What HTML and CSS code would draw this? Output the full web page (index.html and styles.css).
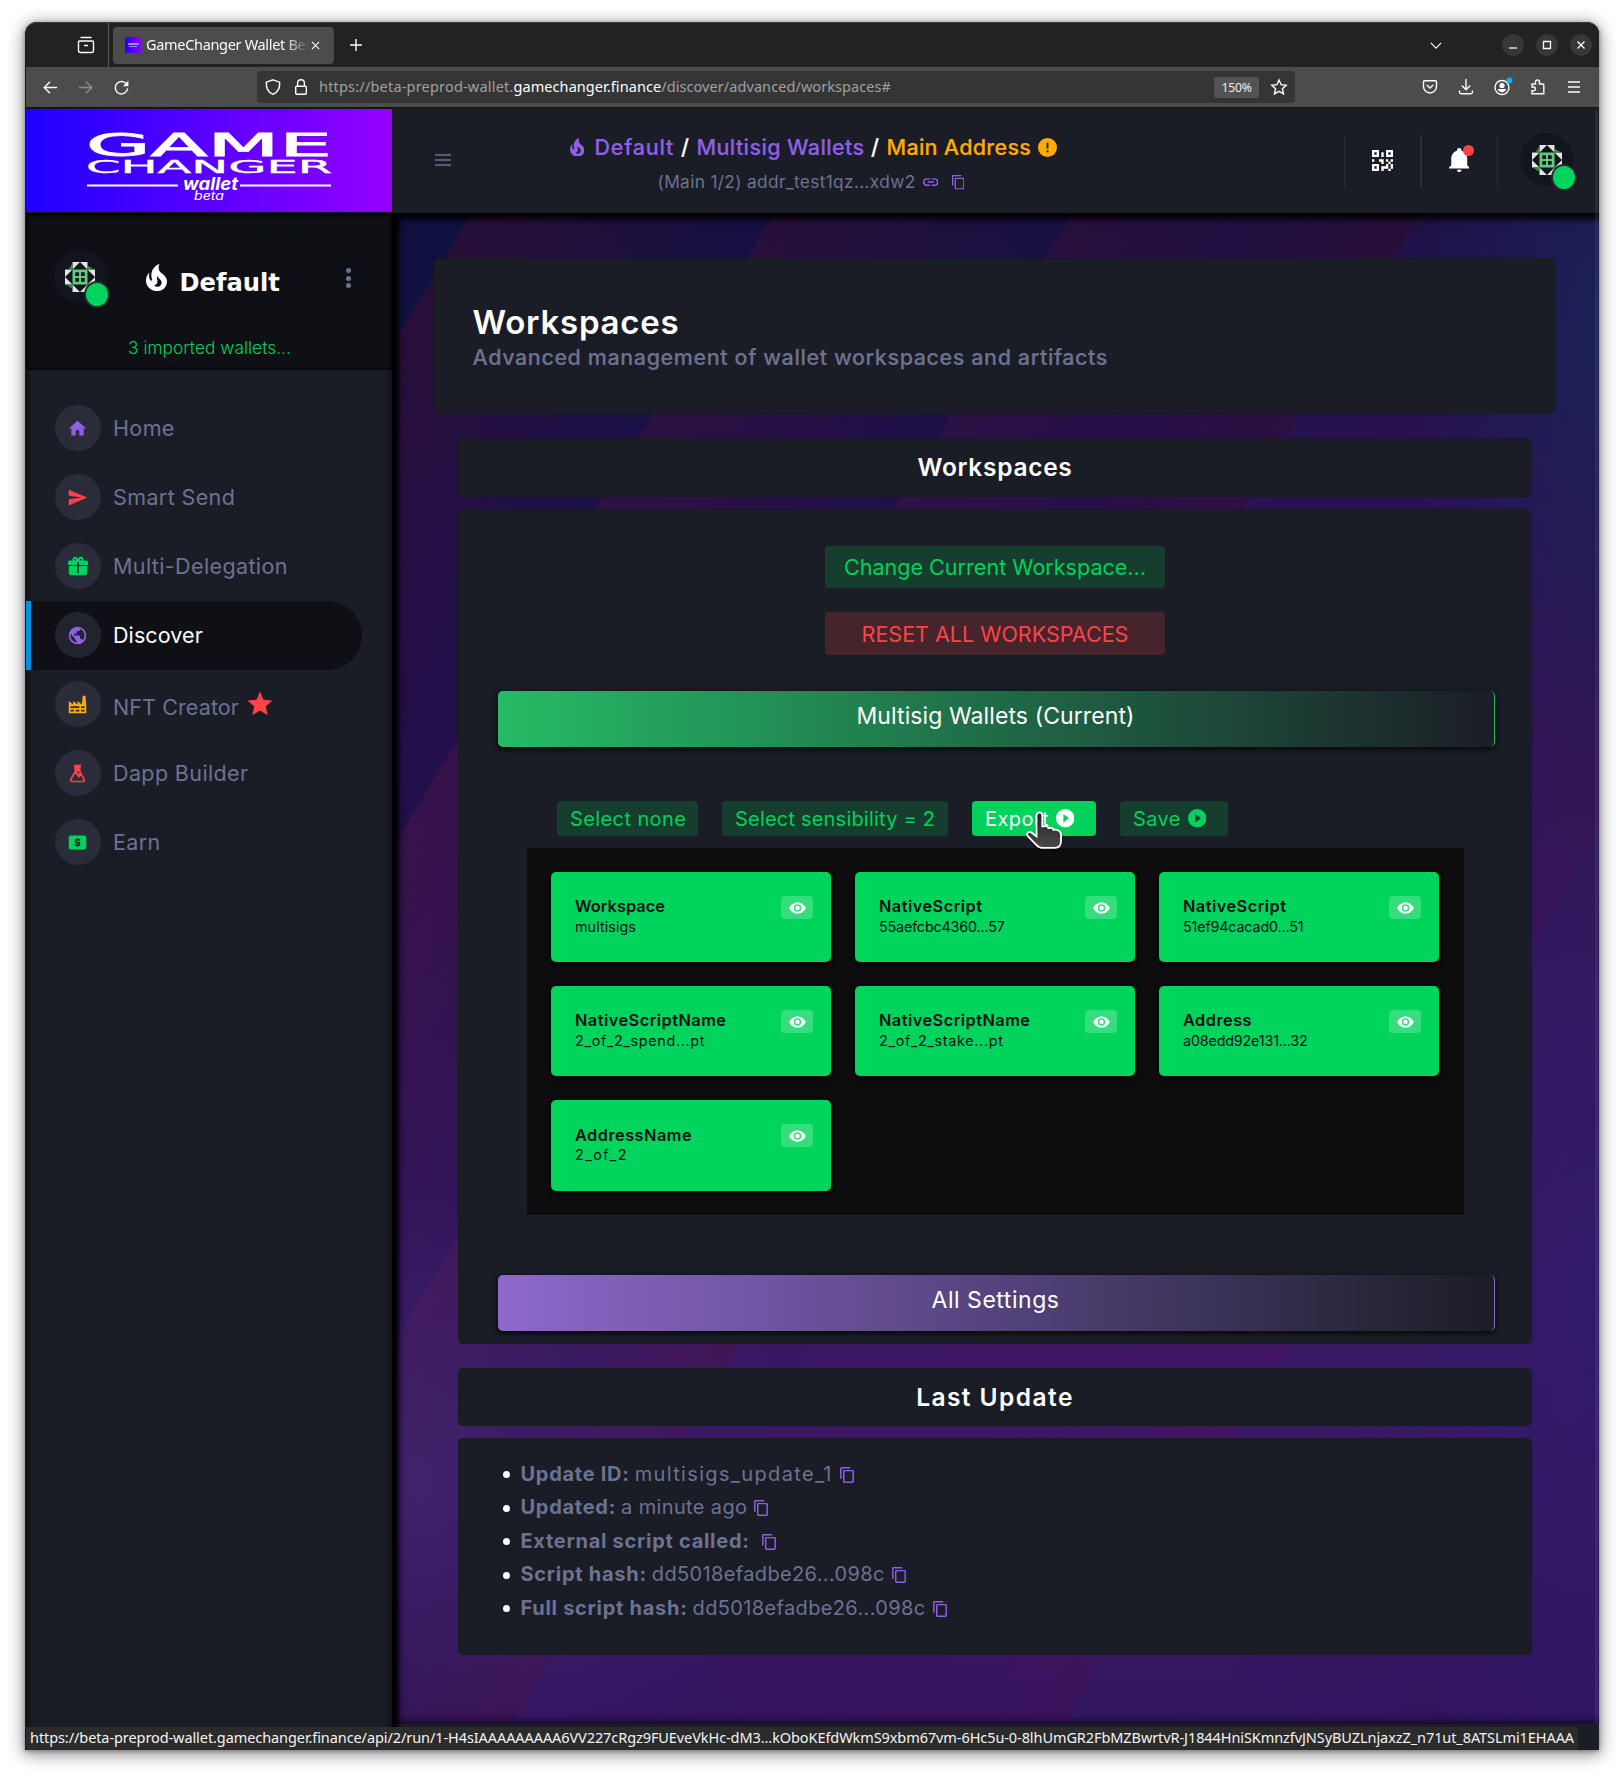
FILE: index.html
```html
<!DOCTYPE html>
<html lang="en">
<head>
<meta charset="utf-8">
<title>GameChanger Wallet Beta</title>
<link rel="stylesheet" href="styles.css">
</head>
<body>
<svg class="sprite" aria-hidden="true">
  <symbol id="home" viewBox="0 0 24 24"><path d="M10,20V14H14V20H19V12H22L12,3L2,12H5V20H10Z"/></symbol>
  <symbol id="send" viewBox="0 0 24 24"><path d="M2,21L23,12L2,3V10L17,12L2,14V21Z"/></symbol>
  <symbol id="gift" viewBox="0 0 24 24"><path d="M9.06,1.93C7.17,1.92 5.33,3.74 6.17,6H3A2,2 0 0,0 1,8V10A1,1 0 0,0 2,11H11V8H13V11H22A1,1 0 0,0 23,10V8A2,2 0 0,0 21,6H17.83C19,2.73 14.6,0.42 12.57,3.24L12,4L11.43,3.22C10.8,2.33 9.93,1.94 9.06,1.93M9,4C9.89,4 10.34,5.08 9.71,5.71C9.08,6.34 8,5.89 8,5A1,1 0 0,1 9,4M15,4C15.89,4 16.34,5.08 15.71,5.71C15.08,6.34 14,5.89 14,5A1,1 0 0,1 15,4M2,12V20A2,2 0 0,0 4,22H20A2,2 0 0,0 22,20V12H13V20H11V12H2Z"/></symbol>
  <symbol id="earth" viewBox="0 0 24 24"><path d="M17.9,17.39C17.64,16.59 16.89,16 16,16H15V13A1,1 0 0,0 14,12H8V10H10A1,1 0 0,0 11,9V7H13A2,2 0 0,0 15,5V4.59C17.93,5.77 20,8.64 20,12C20,14.08 19.2,15.97 17.9,17.39M11,19.93C7.05,19.44 4,16.08 4,12C4,11.38 4.08,10.78 4.21,10.21L9,15V16A2,2 0 0,0 11,18M12,2A10,10 0 0,0 2,12A10,10 0 0,0 12,22A10,10 0 0,0 22,12A10,10 0 0,0 12,2Z"/></symbol>
  <symbol id="factory" viewBox="0 0 24 24"><path d="M4,18V20H8V18H4M4,14V16H14V14H4M10,18V20H14V18H10M16,14V16H20V14H16M16,18V20H20V18H16M2,22V8L7,12V8L12,12V8L17,12L18,2H21L22,12V22H2Z"/></symbol>
  <symbol id="flask" viewBox="0 0 24 24"><path fill-rule="evenodd" d="M8,2H16V4.500L15.500,5V9.500L20.500,18.500C21.400,20.300 20.400,22 18.500,22H5.500C3.600,22 2.600,20.300 3.500,18.500L8.500,9.500V5L8,4.500Z M9,12.500L5.300,19.200C5,19.800 5.200,20.200 5.800,20.200H18.200C18.800,20.200 19,19.800 18.700,19.200L16,14.400L13.500,17L10.800,13.500Z M13,9.700a1.100,1.100 0 1,0 .01,0Z"/></symbol>
  <symbol id="cash" viewBox="0 0 24 24"><path d="M4,4H20A2,2 0 0,1 22,6V18A2,2 0 0,1 20,20H4A2,2 0 0,1 2,18V6A2,2 0 0,1 4,4M11,7V8H10A1,1 0 0,0 9,9V12A1,1 0 0,0 10,13H13V14H9V16H11V17H13V16H14A1,1 0 0,0 15,15V12A1,1 0 0,0 14,11H11V10H15V8H13V7H11Z"/></symbol>
  <symbol id="star" viewBox="0 0 24 24"><path d="M12,17.270L18.180,21L16.540,13.970L22,9.240L14.810,8.620L12,2L9.190,8.620L2,9.240L7.450,13.970L5.820,21L12,17.270Z"/></symbol>
  <symbol id="fire" viewBox="5 3 14 18"><path d="M17.66 11.2C17.43 10.9 17.15 10.64 16.89 10.38C16.22 9.78 15.46 9.35 14.82 8.72C13.33 7.26 13 4.85 13.95 3C13 3.23 12.17 3.75 11.46 4.32C8.87 6.4 7.85 10.07 9.07 13.22C9.11 13.32 9.15 13.42 9.15 13.55C9.15 13.77 9 13.97 8.8 14.05C8.57 14.15 8.33 14.09 8.14 13.93C8.08 13.88 8.04 13.83 8 13.76C6.87 12.33 6.69 10.28 7.45 8.64C5.78 10 4.87 12.3 5 14.47C5.06 14.97 5.12 15.47 5.29 15.97C5.43 16.57 5.7 17.17 6 17.7C7.08 19.43 8.95 20.67 10.96 20.92C13.1 21.19 15.39 20.8 17.03 19.32C18.86 17.66 19.5 15 18.56 12.72L18.43 12.46C18.22 12 17.66 11.2 17.66 11.2M14.5 17.5C14.22 17.74 13.76 18 13.4 18.1C12.28 18.5 11.16 17.94 10.5 17.28C11.69 17 12.4 16.12 12.61 15.23C12.78 14.43 12.46 13.77 12.33 13C12.21 12.26 12.23 11.63 12.5 10.94C12.69 11.32 12.89 11.7 13.13 12C13.9 13 15.11 13.44 15.37 14.8C15.41 14.94 15.43 15.08 15.43 15.23C15.46 16.05 15.1 16.95 14.5 17.5H14.5Z"/></symbol>
  <symbol id="alert" viewBox="2 2 20 20"><path d="M13,13H11V7H13M13,17H11V15H13M12,2A10,10 0 0,0 2,12A10,10 0 0,0 12,22A10,10 0 0,0 22,12A10,10 0 0,0 12,2Z"/></symbol>
  <symbol id="link" viewBox="2 7 20 10"><path d="M3.9,12C3.9,10.29 5.29,8.9 7,8.9H11V7H7A5,5 0 0,0 2,12A5,5 0 0,0 7,17H11V15.1H7C5.29,15.1 3.9,13.71 3.9,12M8,13H16V11H8V13M17,7H13V8.9H17C18.71,8.9 20.1,10.29 20.1,12C20.1,13.71 18.71,15.1 17,15.1H13V17H17A5,5 0 0,0 22,12A5,5 0 0,0 17,7Z"/></symbol>
  <symbol id="copy" viewBox="2 1 19 22"><path d="M19,21H8V7H19M19,5H8A2,2 0 0,0 6,7V21A2,2 0 0,0 8,23H19A2,2 0 0,0 21,21V7A2,2 0 0,0 19,5M16,1H4A2,2 0 0,0 2,3V17H4V3H16V1Z"/></symbol>
  <symbol id="bell" viewBox="3 2 18 21"><path d="M21,19V20H3V19L5,17V11C5,7.9 7.03,5.17 10,4.29C10,4.19 10,4.1 10,4A2,2 0 0,1 12,2A2,2 0 0,1 14,4C14,4.1 14,4.19 14,4.29C16.97,5.17 19,7.9 19,11V17L21,19M14,21A2,2 0 0,1 12,23A2,2 0 0,1 10,21"/></symbol>
  <symbol id="qr" viewBox="3 3 18 18"><path d="M3,11H5V13H3V11M11,5H13V9H11V5M9,11H13V15H11V13H9V11M15,11H17V13H19V11H21V13H19V15H21V19H19V21H17V19H13V21H11V17H15V15H17V13H15V11M19,19V15H17V19H19M15,3H21V9H15V3M17,5V7H19V5H17M3,3H9V9H3V3M5,5V7H7V5H5M3,15H9V21H3V15M5,17V19H7V17H5Z"/></symbol>
  <symbol id="play" viewBox="2 2 20 20"><path d="M10,16.500V7.500L16,12M12,2A10,10 0 0,0 2,12A10,10 0 0,0 12,22A10,10 0 0,0 22,12A10,10 0 0,0 12,2Z"/></symbol>
  <symbol id="eye" viewBox="1 4 22 16"><path d="M12,9A3,3 0 0,0 9,12A3,3 0 0,0 12,15A3,3 0 0,0 15,12A3,3 0 0,0 12,9M12,17A5,5 0 0,1 7,12A5,5 0 0,1 12,7A5,5 0 0,1 17,12A5,5 0 0,1 12,17M12,4.5C7,4.5 2.730,7.610 1,12C2.730,16.390 7,19.500 12,19.500C17,19.500 21.270,16.390 23,12C21.270,7.610 17,4.500 12,4.500Z"/></symbol>
  <symbol id="identicon" viewBox="0 0 30 30">
    <path fill="#e4e4e4" d="M7.500 0H15L7.500 7.500ZM15 0H22.500V7.500ZM7.500 22.500L15 30H7.500ZM22.500 22.500V30H15ZM0 7.500H7.500L0 15ZM0 15L7.500 22.500H0ZM22.500 7.500H30V15ZM30 15V22.500H22.500Z"/>
    <path fill="#2f8f45" d="M7.500 1V7.500H3.500ZM22.500 3.500L29 7.500H22.500ZM22.500 22.500H27L22.500 29ZM1 22.500H7.500V27Z"/>
    <path fill="#5fcb7c" fill-rule="evenodd" d="M7.500 7.500H22.500V22.500H7.500ZM10.300 10.300V14H14V10.300ZM16 10.300V14H19.700V10.300ZM10.300 16V19.700H14V16ZM16 16V19.700H19.700V16Z"/>
  </symbol>
</svg>

<div class="window">
  <div class="tabstrip">
    <svg class="archive" viewBox="0 0 18 18"><path d="M3.500 1.500H14.500M2.500 5H15.500M2.500 5Q1.500 5 1.500 6.200V14.500Q1.500 16.500 3.500 16.500H14.500Q16.500 16.500 16.500 14.500V6.200Q16.500 5 15.500 5M7 9.500H11"/></svg>
    <div class="tab">
      <span class="favicon"><i></i><i></i></span>
      <span class="tab-title">GameChanger Wallet Beta</span>
      <svg class="x" viewBox="0 0 10 10"><path d="M1 1L9 9M9 1L1 9"/></svg>
    </div>
    <svg class="plus" viewBox="0 0 12 12"><path d="M6 0V12M0 6H12"/></svg>
    <svg class="chevron" viewBox="0 0 14 8"><path d="M1 1L7 7L13 1"/></svg>
    <div class="winbtns">
      <span><svg viewBox="0 0 10 10"><path d="M1 8H9"/></svg></span>
      <span><svg viewBox="0 0 10 10"><path d="M1.500 1.500H8.500V8.500H1.500Z"/></svg></span>
      <span><svg viewBox="0 0 10 10"><path d="M1.500 1.500L8.500 8.500M8.500 1.500L1.500 8.500"/></svg></span>
    </div>
  </div>

  <div class="toolbar">
    <div class="nav-icons">
      <svg viewBox="0 0 16 16"><path d="M15 8H1.500M7.500 1.800L1.300 8L7.500 14.200"/></svg>
      <svg class="dim" viewBox="0 0 16 16"><path d="M1 8H14.500M8.500 1.800L14.700 8L8.500 14.200"/></svg>
      <svg viewBox="0 0 16 16"><path d="M14.500 9A6.600 6.600 0 1 1 12.300 3.300L14 5"/><path class="solid" d="M15.300 .8V6.700H9.400Z"/></svg>
    </div>
    <div class="urlbar">
      <svg class="shield" viewBox="0 0 16 16"><path d="M8 .8L14.700 3.200C15 9 12.500 13.500 8 15.300C3.500 13.500 1 9 1.300 3.200Z"/></svg>
      <svg class="lock" viewBox="0 0 12 16"><path d="M1.500 7.300H10.500Q11.300 7.300 11.300 8.200V14.200Q11.300 15.200 10.300 15.200H1.700Q.7 15.200 .7 14.200V8.200Q.7 7.300 1.500 7.300M2.600 7V4.200A3.400 3.400 0 0 1 9.400 4.200V7"/></svg>
      <div class="url"><span class="proto">https://beta-preprod-wallet.</span><b>gamechanger.finance</b><span>/discover/advanced/workspaces#</span></div>
      <span class="zoomlvl">150%</span>
      <svg class="fav" viewBox="0 0 16 16"><path d="M8 1L10.100 5.700L15.200 6.200L11.400 9.700L12.500 14.900L8 12.300L3.500 14.900L4.600 9.700L.8 6.200L5.900 5.700Z"/></svg>
    </div>
    <div class="tools">
      <svg viewBox="0 0 16 16"><path d="M2.500 1.800H13.500Q14.500 1.800 14.500 2.800V7.500A6.500 6.500 0 0 1 1.500 7.500V2.800Q1.500 1.800 2.500 1.800M4.800 6L8 9L11.200 6"/></svg>
      <svg viewBox="0 0 16 16"><path d="M8 0V10.500M3.800 6.500L8 10.700L12.200 6.500M1.500 11.500V13Q1.500 14.700 3.200 14.700H12.800Q14.500 14.700 14.500 13V11.500"/></svg>
      <svg class="acct" viewBox="0 0 16 16"><circle cx="8" cy="8.500" r="7"/><circle class="solid" cx="8" cy="6.500" r="2.600"/><path class="solid" d="M3.800 10H12.200Q11 13.200 8 13.200Q5 13.200 3.800 10Z"/><circle class="bluedot" cx="15.500" cy="1.500" r="3"/></svg>
      <svg viewBox="0 0 16 16"><path d="M2 5H5.500V3A2 2 0 0 1 9.500 3V5H12.500Q13.800 5 13.800 6.300V14.800H2V11.800H3.500A1.900 1.900 0 0 0 3.500 8H2Z"/></svg>
      <svg viewBox="0 0 16 16"><path d="M2 3H14M2 8H14M2 13H14"/></svg>
    </div>
  </div>

  <div class="page">
    <aside class="sidebar">
      <div class="logo">
        <svg viewBox="0 0 366 103">
          <g class="logo-text">
            <text class="lg" x="60" y="47" textLength="246" lengthAdjust="spacingAndGlyphs">GAME</text>
            <text class="lm" x="60" y="63.500" textLength="246" lengthAdjust="spacingAndGlyphs">CHANGER</text>
            <text class="lw" x="157" y="81" textLength="55" lengthAdjust="spacingAndGlyphs">wallet</text>
            <text class="lb" x="168" y="91" textLength="30" lengthAdjust="spacingAndGlyphs">beta</text>
          </g>
          <path class="rules" d="M61 76.500H152M214 76.500H305"/>
        </svg>
      </div>
      <div class="profile">
        <div class="profile-row">
          <span class="avatar"><svg><use href="#identicon"/></svg><i></i></span>
          <svg class="flame"><use href="#fire"/></svg>
          <span class="name">Default</span>
          <span class="kebab"><i></i><i></i><i></i></span>
        </div>
        <div class="imported">3 imported wallets...</div>
      </div>
      <nav>
        <a><span class="ic purple"><svg><use href="#home"/></svg></span><span>Home</span></a>
        <a><span class="ic red"><svg><use href="#send"/></svg></span><span>Smart Send</span></a>
        <a><span class="ic green"><svg class="big"><use href="#gift"/></svg></span><span>Multi-Delegation</span></a>
        <a class="active"><span class="ic purple"><svg><use href="#earth"/></svg></span><span class="tight">Discover</span></a>
        <a><span class="ic orange"><svg><use href="#factory"/></svg></span><span class="tight nft">NFT Creator</span><svg class="star"><use href="#star"/></svg></a>
        <a><span class="ic red"><svg><use href="#flask"/></svg></span><span>Dapp Builder</span></a>
        <a><span class="ic green"><svg><use href="#cash"/></svg></span><span>Earn</span></a>
      </nav>
    </aside>

    <main>
      <header>
        <svg class="burger" viewBox="0 0 16 12"><path d="M0 1H16M0 6H16M0 11H16"/></svg>
        <div class="crumbs">
          <div class="crumb-row">
            <svg class="fire"><use href="#fire"/></svg>
            <span class="c1">Default</span><em>/</em><span class="c2">Multisig Wallets</span><em>/</em><span class="c3">Main Address</span>
            <svg class="alert"><use href="#alert"/></svg>
          </div>
          <div class="addr-row"><span>(Main 1/2) addr_test1qz...xdw2</span><svg class="lnk"><use href="#link"/></svg><svg class="cpy"><use href="#copy"/></svg></div>
        </div>
        <div class="head-tools">
          <span class="cell"><svg class="qr"><use href="#qr"/></svg></span>
          <span class="cell mid"><svg class="bell"><use href="#bell"/></svg><i class="reddot"></i></span>
          <span class="cell last"><span class="avatar"><svg><use href="#identicon"/></svg><i></i></span></span>
        </div>
      </header>

      <div class="canvas">
        <section class="card hero">
          <h1>Workspaces</h1>
          <p>Advanced management of wallet workspaces and artifacts</p>
        </section>

        <h2 class="card h-a">Workspaces</h2>

        <section class="card workspace">
          <button class="wide ok">Change Current Workspace...</button>
          <button class="wide danger">RESET ALL WORKSPACES</button>

          <div class="banner current">Multisig Wallets (Current)</div>

          <div class="actions">
            <button class="b1"><span>Select none</span></button>
            <button class="b2"><span>Select sensibility = 2</span></button>
            <button class="b3 on"><span>Export</span><svg><use href="#play"/></svg>
              <svg class="cursor" viewBox="0 0 38 40"><defs><linearGradient id="hand" x1="0" y1="0" x2="0" y2="1"><stop offset="0" stop-color="#222"/><stop offset="1" stop-color="#4a4a4a"/></linearGradient></defs><path d="M11.500 5.500C11.500 1.500 17.300 1.500 17.300 5.500V16.500L20 16.200C22 16 23 16.800 23.400 18C26 17.400 28 18 28.500 19.800C30.500 19.300 32 19.500 33.500 20.500C35.200 21.500 36 22.500 36 24.500V31C36 35.500 34 37.800 30 37.800H17C14.500 37.800 13 37 11.500 35L3 26.500C.5 23.500 4 20.500 6.800 22.800L11.500 26.500Z"/></svg>
            </button>
            <button class="b4"><span>Save</span><svg><use href="#play"/></svg></button>
          </div>

          <div class="artifacts">
            <article><div><h3 class="snug">Workspace</h3><p>multisigs</p></div><span class="eye"><svg><use href="#eye"/></svg></span></article>
            <article><div><h3>NativeScript</h3><p class="hash">55aefcbc4360...57</p></div><span class="eye"><svg><use href="#eye"/></svg></span></article>
            <article><div><h3>NativeScript</h3><p class="hash">51ef94cacad0...51</p></div><span class="eye"><svg><use href="#eye"/></svg></span></article>
            <article><div><h3>NativeScriptName</h3><p class="id">2_of_2_spend...pt</p></div><span class="eye"><svg><use href="#eye"/></svg></span></article>
            <article><div><h3>NativeScriptName</h3><p class="id">2_of_2_stake...pt</p></div><span class="eye"><svg><use href="#eye"/></svg></span></article>
            <article><div><h3>Address</h3><p class="hash">a08edd92e131...32</p></div><span class="eye"><svg><use href="#eye"/></svg></span></article>
            <article class="tall"><div><h3>AddressName</h3><p class="id">2_of_2</p></div><span class="eye"><svg><use href="#eye"/></svg></span></article>
          </div>

          <div class="banner settings">All Settings</div>
        </section>

        <h2 class="card h-b">Last Update</h2>

        <section class="card update">
          <ul>
            <li><b>Update ID:</b><span class="id">multisigs_update_1</span><svg><use href="#copy"/></svg></li>
            <li><b>Updated:</b><span>a minute ago</span><svg><use href="#copy"/></svg></li>
            <li><b>External script called:</b><span></span><svg><use href="#copy"/></svg></li>
            <li><b>Script hash:</b><span>dd5018efadbe26...098c</span><svg><use href="#copy"/></svg></li>
            <li><b>Full script hash:</b><span>dd5018efadbe26...098c</span><svg><use href="#copy"/></svg></li>
          </ul>
        </section>
      </div>
    </main>
    <i class="scrollbar"></i>
  </div>
  <div class="status">https://beta-preprod-wallet.gamechanger.finance/api/2/run/1-H4sIAAAAAAAAA6VV227cRgz9FUEveVkHc-dM3...kOboKEfdWkmS9xbm67vm-6Hc5u-0-8lhUmGR2FbMZBwrtvR-J1844HniSKmnzfvJNSyBUZLnjaxzZ_n71ut_8ATSLmi1EHAAA</div>
</div>
</body>
</html>
```
FILE: styles.css
```css
* { box-sizing: border-box; }
body { margin: 0; width: 1624px; height: 1778px; background: #fff; font-family: Inter, Roboto, "Liberation Sans", sans-serif; overflow: hidden; }
h1, h2, h3, p, ul { margin: 0; padding: 0; font-weight: inherit; }
button { border: 0; padding: 0; font: inherit; letter-spacing: inherit; }
svg { display: block; fill: currentColor; flex: none; }
span, b, h1, h2, h3, p, div { white-space: nowrap; }
.sprite { position: absolute; width: 0; height: 0; }

.window { width: 1574px; height: 1728px; margin: 22px 25px 28px 25px; display: flex; flex-direction: column; border-left: 1px solid #1a1b1e; border-radius: 12px 12px 0 0; background: #1a1d25; box-shadow: 0 3px 16px 2px rgba(0,0,0,.42), 0 1px 4px 0 rgba(0,0,0,.35); }

/* browser chrome */
.tabstrip, .toolbar { font-family: "Noto Sans", "Open Sans", sans-serif; font-size: 14.500px; color: #fbfbfe; flex: none; display: flex; align-items: center; }
.tabstrip svg, .toolbar svg { fill: none; stroke: #fbfbfe; stroke-width: 1.4; overflow: visible; }
.tabstrip { height: 45px; background: #222; border-top: 1px solid #3a3a3a; border-radius: 11px 12px 0 0; }
.archive { width: 18px; height: 18px; margin-left: 51px; }
.tab { width: 221px; height: 37px; margin-left: 18px; background: #4c4c4c; border-radius: 4px; display: flex; align-items: center; padding-left: 12px; position: relative; }
.tab::before { content: ""; position: absolute; left: -5px; top: -4px; width: 1px; height: 45px; background: #5a5a5a; }
.favicon { width: 16px; height: 16px; background: linear-gradient(90deg, #2000ff, #9000ff); display: flex; flex-direction: column; gap: 1px; align-items: center; justify-content: center; }
.favicon i { width: 11px; height: 2px; background: #9a8cff; }
.favicon i + i { width: 8px; height: 1px; }
.tab-title { margin-left: 5px; margin-top: -2px; width: 163px; letter-spacing: -.320px; overflow: hidden; -webkit-mask-image: linear-gradient(90deg, #000 85%, transparent); mask-image: linear-gradient(90deg, #000 85%, transparent); }
.tabstrip .x { width: 9px; height: 9px; margin-left: 2px; stroke-width: 1.2; }
.plus { width: 12px; height: 12px; margin-left: 16px; }
.chevron { width: 12px; height: 7px; margin-left: auto; margin-right: 60px; }
.winbtns { display: flex; gap: 12px; margin-right: 7px; }
.winbtns span { width: 22px; height: 22px; border-radius: 50%; background: #373737; display: grid; place-items: center; }
.winbtns svg { width: 10px; height: 10px; stroke-width: 1.3; }
.toolbar { height: 40px; background: #4c4c4c; }
.nav-icons { display: flex; gap: 20.500px; padding-left: 16.500px; width: 231px; }
.nav-icons svg { width: 15px; height: 15px; stroke-width: 1.500; }
.toolbar .dim { stroke: #8c8c8c; }
.toolbar .solid { fill: #fbfbfe; stroke: none; }
.toolbar .bluedot { fill: #00b3f4; stroke: none; }
.urlbar { width: 1038px; height: 32px; background: #353535; border-radius: 4px; display: flex; align-items: center; padding-left: 8px; }
.shield { width: 16px; height: 16px; }
.lock { width: 12px; height: 16px; margin-left: 14px; }
.url { margin: -2px 0 0 12px; color: #a0a0a0; display: flex; letter-spacing: .070px; }
.url .proto { letter-spacing: .190px; }
.url b { font-weight: 400; color: #fff; }
.zoomlvl { margin-left: auto; width: 45px; height: 21px; background: #535353; border-radius: 3px; font-size: 12.200px; letter-spacing: -.200px; line-height: 21px; text-align: center; color: #ececec; }
.fav { width: 16px; height: 16px; margin: 0 8px 0 12px; }
.tools { display: flex; gap: 20px; margin-left: 127px; }
.tools svg { width: 16px; height: 16px; }

/* page */
.page { flex: 1; display: flex; min-height: 0; border-top: 1px solid #111; position: relative; }
.sidebar { width: 366px; flex: none; background: #1a1d25; padding-top: 1px; position: relative; z-index: 2; box-shadow: inset 5px 0 5px -3px #0008, inset -5px 0 5px -3px #0008; }
.logo { height: 103px; background: linear-gradient(90deg, #1d00ff, #9500ff); }
.logo svg { width: 366px; height: 103px; }
.logo-text { fill: #fff; stroke: #fff; font-family: "DejaVu Sans", sans-serif; }
.lg { font-size: 32.500px; stroke-width: .9; }
.lm { font-size: 18.500px; stroke-width: .35; }
.lw { font-family: Inter, sans-serif; font-size: 17px; font-weight: 700; font-style: italic; stroke: none; }
.lb { font-family: Inter, sans-serif; font-size: 12.500px; font-style: italic; stroke: none; }
.rules { stroke: #fff; stroke-width: 1.800; }
.profile { height: 158px; background: #0f1015; box-shadow: inset 0 2px 4px #000, inset 0 -2px 3px #0008; border-top: 1px solid #15151f; }
.profile-row { display: flex; height: 92px; padding: 37px 0 0 27.500px; }
.avatar { width: 53px; height: 53px; border-radius: 50%; background: #12151d; position: relative; display: grid; place-items: center; flex: none; }
.avatar svg { width: 30px; height: 30px; }
.avatar i { position: absolute; left: 30.500px; top: 30.500px; width: 26px; height: 27px; border-radius: 50%; background: #00d45d; border: 2.500px solid #262932; }
.flame { width: 21px; height: 27px; color: #fff; margin: 14px 0 0 39px; }
.name { font-family: "DejaVu Sans", sans-serif; font-weight: 700; font-size: 24.200px; line-height: 28px; color: #fff; margin: 18.500px 0 0 13px; width: 100px; }
.kebab { display: flex; flex-direction: column; gap: 2.500px; margin: 18px 0 0 66.500px; }
.kebab i { width: 5px; height: 5px; border-radius: 50%; background: #6c7293; }
.imported { font-weight: 300; font-size: 17.300px; line-height: 24px; color: #00d25b; padding: 31px 0 0 102px; letter-spacing: .040px; }
nav { padding-top: 24px; }
nav a { height: 69px; display: flex; align-items: center; padding: 0 0 1px 28.500px; color: #6c7293; font-size: 21.500px; letter-spacing: .380px; margin-right: 30px; }
nav a .tight { letter-spacing: .100px; }
nav .ic { width: 46px; height: 46px; border-radius: 50%; background: #2a2d39; display: grid; place-items: center; margin-right: 12.500px; flex: none; }
nav .ic svg { width: 21px; height: 21px; }
nav .ic svg.big { width: 22px; height: 22px; }
nav a.active { background: #0f1015; color: #fff; border-left: 5px solid #0090e7; padding-left: 23.500px; border-radius: 0 34.500px 34.500px 0; }
.active .ic { background: #22242d; }
.purple { color: #8f5fe8; } .red { color: #ff4247; } .green { color: #00d25b; } .orange { color: #ffab00; }
nav a .nft { padding-top: 6px; }
.star { width: 30px; height: 30px; color: #ff4247; margin: -1px 0 0 6px; }

main { flex: 1; display: flex; flex-direction: column; min-width: 0; }
header { height: 105px; background: #1a1d25; display: flex; flex: none; position: relative; z-index: 1; box-shadow: 0 4px 7px 2px #000; clip-path: inset(0 0 -20px 0); }
.burger { width: 16px; height: 12px; stroke: #6c7293; stroke-width: 1.700; margin: 46px 0 0 43px; }
.crumbs { width: 490px; margin-left: 118.500px; padding-top: 24px; }
.crumb-row { display: flex; align-items: center; height: 30px; font-weight: 500; font-size: 21.500px; color: #8f5fe8; -webkit-text-stroke: .2px; }
.crumb-row .fire { width: 14.500px; height: 18.500px; margin-right: 10.500px; }
.crumb-row em { font-style: normal; color: #fff; width: 23px; text-align: center; }
.crumb-row .c1 { width: 79px; letter-spacing: .770px; }
.crumb-row .c2 { width: 167px; letter-spacing: .380px; }
.crumb-row .c3 { width: 144px; letter-spacing: .280px; }
.crumb-row .c3, .crumb-row .alert { color: #ffab00; }
.crumb-row .alert { width: 19px; height: 19px; margin-left: 7px; }
.addr-row { display: flex; align-items: center; height: 24px; margin-top: 7.500px; padding-left: 88px; font-size: 17.300px; letter-spacing: .340px; color: #6c7293; }
.addr-row span { width: 258px; }
.addr-row svg { color: #8f5fe8; }
.lnk { width: 15.500px; height: 8px; margin-left: 7px; }
.cpy { width: 12.500px; height: 14.500px; margin: 2px 0 0 13.500px; }
.head-tools { display: flex; margin: 26.500px 0 0 auto; height: 52px; padding-right: 26px; color: #fff; }
.cell { border-left: 1px solid #2c2e33; width: 76.500px; display: grid; place-items: center; position: relative; }
.cell.mid { border-left-width: 2px; }
.qr { width: 21px; height: 21px; margin: -1px 18px 0 0; }
.cell:first-child { padding-left: 19px; }
.bell { width: 20.500px; height: 24px; margin: -1px 1px 0 0; }
.reddot { position: absolute; left: 41px; top: 10px; width: 11px; height: 11px; border-radius: 50%; background: #ff4247; }
.cell.last { justify-items: end; }
.cell.last .avatar { margin-top: -2px; }

.canvas { flex: 1; position: relative; min-height: 0; padding: 45px 43px 0 41.500px; margin-bottom: 26px;
  background:
    radial-gradient(420px 300px at 0 84%, rgba(70,50,125,.5), transparent 100%),
    radial-gradient(190px 560px at 100% 8%, rgba(24,38,92,.7), transparent),
    radial-gradient(220px 620px at 100% 72%, rgba(40,30,110,.5), transparent),
    linear-gradient(121deg, rgba(14,18,70,.75) 68px, rgba(56,18,64,.55) 68.500px, rgba(24,16,78,.6) 327px, rgba(60,20,72,.5) 328px, rgba(30,18,84,.5) 583px, rgba(62,20,78,.5) 584px, rgba(44,18,84,.5) 740px, rgba(62,16,70,.5) 881px, rgba(46,22,100,.5) 882px, rgba(62,20,94,.45) 1354px, rgba(46,28,100,.5) 1355px, rgba(44,20,96,.5) 1814px),
    linear-gradient(180deg, #100d2c 0, #220f42 20%, #3a1152 50%, #451766 72%, #36125c 100%);
  box-shadow: inset 10px -6px 8px -3px #0009; }
.canvas::before { content: ""; position: absolute; left: 0; top: 0; bottom: -4px; width: 9px; background: linear-gradient(90deg, #000 35%, transparent); }
.card { background: #1a1d25; border-radius: 5px; border: 1px solid #181a1e; color: #fff; display: block; }
.hero { height: 156px; width: 1121px; padding: 44px 38px 0; }
.hero h1 { font-weight: 600; font-size: 33px; line-height: 39.500px; letter-spacing: .750px; }
.hero p { font-weight: 500; font-size: 21.500px; line-height: 29.500px; color: #6c7293; letter-spacing: .600px; -webkit-text-stroke: .2px; }
h2.card { margin: 24px 0 0 24px; width: 1074px; text-align: center; font-weight: 600; font-size: 24.500px; letter-spacing: .700px; line-height: 57px; height: 59px; padding-left: 1px; }
h2.h-b { height: 58px; line-height: 56px; letter-spacing: 1.450px; }
.workspace { margin: 12px 0 0 24px; width: 1074px; height: 835px; padding: 36px 38px 0 39px; }
.wide { display: block; width: 340px; height: 42px; margin: 0 0 0 327.500px; border-radius: 4px; font-size: 21.500px; line-height: 38px; }
.ok, .actions button { background: #163e2f; color: #00d25b; }
.ok { letter-spacing: .030px; }
.ok { padding-bottom: 1px; }
.danger { background: #45242c; color: #ff4247; margin-top: 24px; height: 43px; }
.banner { height: 56px; border-radius: 5px; font-size: 23px; line-height: 50px; text-align: center; box-shadow: 0 2px 5px 1px #000a; width: 997px; }
.current { background: linear-gradient(90deg, #26bb66, #1f6b47 50%, #1b1d26); border-right: 1px solid #26bb66; margin-top: 36px; letter-spacing: .100px; }
.settings { background: linear-gradient(90deg, #8d69cc, #54437d 50%, #1b1d26); border-right: 1px solid #8d69cc; margin-top: 60px; letter-spacing: .540px; }
.actions { display: flex; gap: 24px; margin: 54px 0 0 59.500px; }
.actions button { height: 35px; border-radius: 4px; font-size: 20px; line-height: 35px; display: flex; align-items: center; padding-left: 13px; position: relative; letter-spacing: .400px; }
.actions button > span { padding-top: 1px; }
.actions button > svg { width: 18.500px; height: 18.500px; margin-left: 7px; }
.b1 { width: 141px; } .actions .b2 { width: 226px; letter-spacing: .200px; } .b3 { width: 124px; } .b4 { width: 108px; }
.actions .on { background: #00d25b; color: #fff; }
.actions .on > .cursor { position: absolute; z-index: 3; left: 53px; top: 9px; width: 38px; height: 40px; margin: 0; fill: url(#hand); stroke: #fff; stroke-width: 1.800; filter: drop-shadow(0 1px 1px #0006); }
.artifacts { margin: 12px 0 0 29.500px; width: 937px; height: 367px; background: #0d0d0d; padding: 24px; display: grid; grid-template-columns: repeat(3, 280px); grid-template-rows: 90px 90px 91px; gap: 24px; }
article { background: #00d45d; border-radius: 5px; box-shadow: 0 2px 5px #000; padding: 24px 18px 0 24px; display: flex; justify-content: space-between; color: #0d1014; }
article h3 { font-weight: 600; font-size: 16.300px; line-height: 21px; letter-spacing: .500px; }
article h3.snug { letter-spacing: .050px; }
article.tall h3 { line-height: 22px; }
article.tall p { line-height: 18px; }
article p { font-size: 14.300px; line-height: 20px; letter-spacing: .100px; }
article p.hash { letter-spacing: -.150px; }
article p.id { letter-spacing: .700px; }
article.tall p.id { letter-spacing: 1.450px; }
.eye { width: 32px; height: 23px; border-radius: 4px; background: #35dd7d; display: grid; place-items: center; color: #fff; }
.eye svg { margin-top: 1px; width: 17px; height: 12px; }
.update { margin: 12px 0 0 24px; width: 1074px; height: 217px; padding: 18px 0 0 44px; }
.update ul { list-style: none; }
.update li { display: flex; align-items: center; height: 33.500px; font-size: 20px; color: #6c7293; letter-spacing: .360px; }
.update li::before { content: ""; width: 7px; height: 7px; border-radius: 50%; background: #fff; margin: 2px 11px 0 0; }
.update b { font-weight: 700; margin-right: 5px; letter-spacing: .720px; }
.update .id { letter-spacing: 1.340px; }
.update svg { color: #8f5fe8; width: 14px; height: 16px; margin-left: 7px; margin-top: 2px; }
.scrollbar { position: absolute; right: 1px; top: 3px; bottom: 26px; width: 3px; background: #ffffff10; z-index: 3; }
.status { position: absolute; left: 26px; top: 1727px; height: 23px; width: 1552px; background: #2b2b2b; color: #f4f4f4; font-family: "Noto Sans", "Open Sans", sans-serif; font-size: 14.500px; letter-spacing: -.084px; line-height: 20px; padding-left: 4px; border-radius: 0 3px 0 0; z-index: 4; }
```
